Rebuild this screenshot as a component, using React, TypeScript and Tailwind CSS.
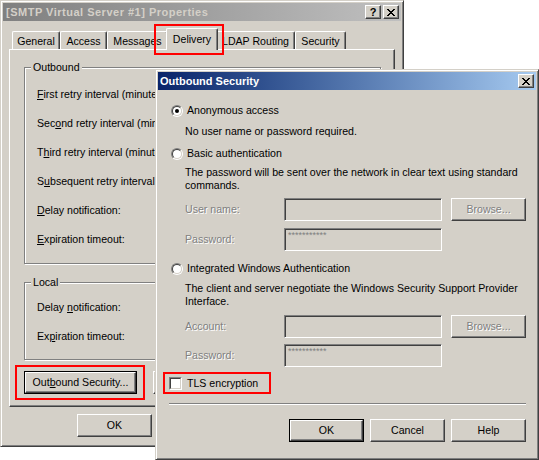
import React from "react";

const raised =
  "border border-t-white border-l-white border-r-[#404040] border-b-[#404040] shadow-[inset_-1px_-1px_0_#808080]";
const sunken =
  "border border-t-[#808080] border-l-[#808080] border-r-white border-b-white shadow-[inset_1px_1px_0_#404040]";
const win =
  "border border-t-[#d4d0c8] border-l-[#d4d0c8] border-r-[#404040] border-b-[#404040] shadow-[inset_1px_1px_0_white,inset_-1px_-1px_0_#808080] p-[2px] bg-[#d4d0c8]";
const dis = "text-[#808080] [text-shadow:1px_1px_0_#fff]";

const X_ROWS = ["11000011", "01100110", "00111100", "00011000", "00111100", "01100110", "11000011"];

function XGlyph() {
  return (
    <svg width="8" height="7" viewBox="0 0 8 7" shapeRendering="crispEdges">
      {X_ROWS.map((row, y) =>
        row.split("").map((c, x) => (c === "1" ? <rect key={`${x}-${y}`} x={x} y={y} width="1" height="1" fill="#000" /> : null))
      )}
    </svg>
  );
}

function CapBtn({ children, className = "" }: { children: React.ReactNode; className?: string }) {
  return (
    <div className={`flex h-[14px] w-[16px] items-center justify-center bg-[#d4d0c8] ${raised} ${className}`}>
      {children}
    </div>
  );
}

function Btn({
  children,
  className = "",
  def = false,
  disabled = false,
}: {
  children: React.ReactNode;
  className?: string;
  def?: boolean;
  disabled?: boolean;
}) {
  const body = (
    <div className={`flex h-full w-full items-center justify-center ${raised} ${disabled ? dis : "text-black"}`}>
      {children}
    </div>
  );
  return <div className={`${def ? "border border-black" : ""} ${className}`}>{body}</div>;
}

function Group({ label, className = "", children }: { label: string; className?: string; children: React.ReactNode }) {
  return (
    <div className={`relative border border-[#808080] shadow-[1px_1px_0_white,inset_1px_1px_0_white] ${className}`}>
      <span className="absolute -top-[7px] left-[6px] bg-[#d4d0c8] px-[2px]">{label}</span>
      {children}
    </div>
  );
}

function Radio({ checked = false }: { checked?: boolean }) {
  return (
    <div className="h-[12px] w-[12px] shrink-0 rounded-full border border-t-[#808080] border-l-[#808080] border-r-white border-b-white">
      <div className="flex h-full w-full items-center justify-center rounded-full border border-t-[#404040] border-l-[#404040] border-r-[#d4d0c8] border-b-[#d4d0c8] bg-white">
        {checked && <div className="h-[4px] w-[4px] rounded-full bg-black" />}
      </div>
    </div>
  );
}

function Checkbox() {
  return (
    <div className="h-[13px] w-[13px] shrink-0 border border-t-[#808080] border-l-[#808080] border-r-white border-b-white">
      <div className="h-full w-full border border-t-[#404040] border-l-[#404040] border-r-[#d4d0c8] border-b-[#d4d0c8] bg-white" />
    </div>
  );
}

function Tab({ label, className = "", selected = false }: { label: string; className?: string; selected?: boolean }) {
  return (
    <div
      className={`flex items-start justify-center whitespace-nowrap rounded-t-[2px] border-l border-t border-r border-l-white border-t-white border-r-[#404040] bg-[#d4d0c8] shadow-[inset_-1px_0_0_#808080] ${
        selected ? "relative z-10 -mx-[2px] -mb-[1px] h-[22px] pt-[4px]" : "h-[18px] pt-[3px]"
      } ${className}`}
    >
      {label}
    </div>
  );
}

function BackWindow() {
  return (
    <div className={`absolute left-0 top-0 flex h-[447px] w-[404px] flex-col ${win}`}>
      <div className="flex h-[18px] items-center bg-linear-to-r from-[#808080] to-[#c0c0c0] pl-[3px] pr-[2px]">
        <span className="flex-1 text-[11px] font-bold tracking-[0.5px] text-[#d4d0c8]">
          [SMTP Virtual Server #1] Properties
        </span>
        <CapBtn>
          <span className="text-[11px] font-bold leading-none">?</span>
        </CapBtn>
        <CapBtn className="ml-[2px]">
          <XGlyph />
        </CapBtn>
      </div>

      <div className="ml-[9px] mt-[7px] flex h-[21px] items-end">
        <Tab label="General" className="w-[48px]" />
        <Tab label="Access" className="w-[47px]" />
        <Tab label="Messages" className="w-[61px]" />
        <Tab label="Delivery" className="w-[52px]" selected />
        <Tab label="LDAP Routing" className="w-[79px]" />
        <Tab label="Security" className="w-[51px]" />
      </div>

      <div className={`ml-[6px] h-[358px] w-[386px] ${raised}`}>
        <Group label="Outbound" className="ml-[14px] mt-[17px] h-[197px] w-[357px]">
          <div className="flex flex-col gap-[16px] whitespace-nowrap pl-[12px] pt-[20px]">
            <span>
              <u>F</u>irst retry interval (minutes):
            </span>
            <span>
              Sec<u>o</u>nd retry interval (minutes):
            </span>
            <span>
              T<u>h</u>ird retry interval (minutes):
            </span>
            <span>
              S<u>u</u>bsequent retry interval (minutes):
            </span>
            <span>
              <u>D</u>elay notification:
            </span>
            <span>
              <u>E</u>xpiration timeout:
            </span>
          </div>
        </Group>

        <Group label="Local" className="ml-[14px] mt-[18px] h-[78px] w-[357px]">
          <div className="flex flex-col gap-[16px] pl-[12px] pt-[18px]">
            <span>
              Delay <u>n</u>otification:
            </span>
            <span>
              Ex<u>p</u>iration timeout:
            </span>
          </div>
        </Group>

        <div className="ml-[14px] mt-[11px] flex">
          <Btn def className="h-[23px] w-[113px]">
            Out<u>b</u>ound Security...
          </Btn>
          <Btn className="ml-[16px] h-[23px] w-[120px]">Outbound connections...</Btn>
        </div>
      </div>

      <div className="ml-[74px] mt-[7px] flex">
        <Btn className="h-[23px] w-[75px]">OK</Btn>
      </div>
    </div>
  );
}

function FrontDialog() {
  return (
    <div className={`absolute left-[155px] top-[69px] z-20 flex h-[391px] w-[384px] flex-col ${win}`}>
      <div className="flex h-[18px] items-center bg-linear-to-r from-[#0a246a] to-[#a6caf0] pl-[2px] pr-[2px]">
        <span className="flex-1 text-[11px] font-bold text-white">Outbound Security</span>
        <CapBtn>
          <XGlyph />
        </CapBtn>
      </div>

      <div className="flex flex-col">
        <div className="ml-[13px] mt-[14px] flex h-[13px] items-center">
          <Radio checked />
          <span className="ml-[4px]">Anonymous access</span>
        </div>
        <div className="ml-[27px] mt-[8px] h-[13px]">No user name or password required.</div>

        <div className="ml-[13px] mt-[9px] flex h-[13px] items-center">
          <Radio />
          <span className="ml-[4px]">Basic authentication</span>
        </div>
        <div className="ml-[27px] mt-[6px] flex h-[26px] flex-col whitespace-nowrap">
          <span>The password will be sent over the network in clear text using standard</span>
          <span>commands.</span>
        </div>

        <div className="ml-[27px] mt-[6px] flex h-[23px] items-center">
          <span className={`w-[99px] ${dis}`}>User name:</span>
          <div className={`h-[23px] w-[158px] ${sunken}`} />
          <Btn disabled className="ml-[9px] h-[23px] w-[75px]">
            Browse...
          </Btn>
        </div>
        <div className="ml-[27px] mt-[7px] flex h-[23px] items-center">
          <span className={`w-[99px] ${dis}`}>Password:</span>
          <div className={`h-[23px] w-[158px] pl-[3px] pt-[1px] text-[9px] leading-[10px] text-[#808080] ${sunken}`}>
            ***********
          </div>
        </div>

        <div className="ml-[13px] mt-[11px] flex h-[13px] items-center">
          <Radio />
          <span className="ml-[4px]">Integrated Windows Authentication</span>
        </div>
        <div className="ml-[27px] mt-[7px] flex h-[26px] flex-col whitespace-nowrap">
          <span>The client and server negotiate the Windows Security Support Provider</span>
          <span>Interface.</span>
        </div>

        <div className="ml-[27px] mt-[7px] flex h-[23px] items-center">
          <span className={`w-[99px] ${dis}`}>Account:</span>
          <div className={`h-[23px] w-[158px] ${sunken}`} />
          <Btn disabled className="ml-[9px] h-[23px] w-[75px]">
            Browse...
          </Btn>
        </div>
        <div className="ml-[27px] mt-[6px] flex h-[23px] items-center">
          <span className={`w-[99px] ${dis}`}>Password:</span>
          <div className={`h-[23px] w-[158px] pl-[3px] pt-[1px] text-[9px] leading-[10px] text-[#808080] ${sunken}`}>
            ***********
          </div>
        </div>

        <div className="ml-[11px] mt-[10px] flex h-[13px] items-center">
          <Checkbox />
          <span className="ml-[5px]">TLS encryption</span>
        </div>

        <div className="ml-[11px] mt-[13px] h-[2px] w-[357px] border-t border-b border-t-[#808080] border-b-white" />

        <div className="ml-[131px] mt-[14px] flex gap-[6px]">
          <Btn def className="h-[23px] w-[75px]">
            OK
          </Btn>
          <Btn className="h-[23px] w-[75px]">Cancel</Btn>
          <Btn className="h-[23px] w-[75px]">Help</Btn>
        </div>
      </div>
    </div>
  );
}

export default function App() {
  return (
    <div className="relative h-[460px] w-[539px] overflow-hidden bg-white font-['Liberation_Sans',Arial,sans-serif] text-[10.6px] leading-[13px] text-black">
      <BackWindow />
      <FrontDialog />
      <div className="absolute left-[154px] top-[24px] z-30 h-[31px] w-[70px] border-2 border-[#ff0000]" />
      <div className="absolute left-[15px] top-[365px] z-30 h-[35px] w-[130px] border-2 border-[#ff0000]" />
      <div className="absolute left-[163px] top-[372px] z-30 h-[22px] w-[108px] border-2 border-[#ff0000]" />
    </div>
  );
}
